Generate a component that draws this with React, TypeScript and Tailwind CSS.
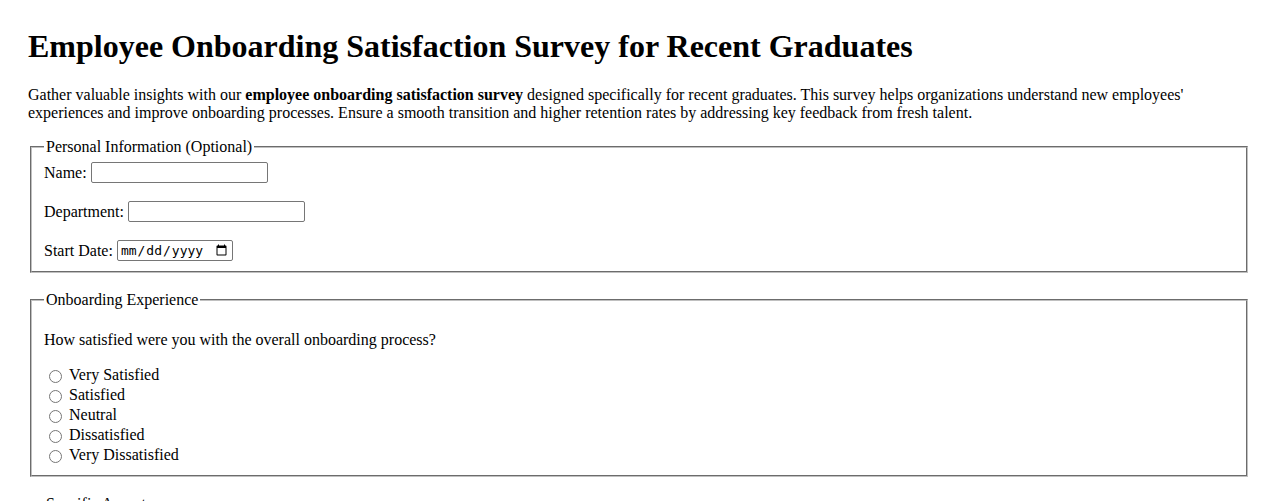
import React from "react";

const inputCls =
  "border border-[#767676] rounded-[2px] bg-white px-[2px] py-[1px] h-[21px] text-[13.33px] [font-family:'DejaVu_Sans',sans-serif] text-black";

const fieldsetCls =
  "mx-[2px] border-2 [border-style:groove] border-[#c0c0c0] px-3 pt-[5.6px] pb-[10px]";

function Radio({ name, label }: { name: string; label: string }) {
  return (
    <div className="flex items-center h-5">
      <input type="radio" name={name} className="w-[13px] h-[13px] ml-[5px] mr-[3px] mt-[3px] mb-0" />
      <span className="ml-1">{label}</span>
    </div>
  );
}

export default function App() {
  return (
    <div className="p-[28px] pb-0 text-[16px] text-black leading-[normal] [font-family:'Liberation_Serif','Times_New_Roman',serif] bg-white">
      <h1 className="text-[32px] font-bold mb-[21.44px]">
        Employee Onboarding Satisfaction Survey for Recent Graduates
      </h1>
      <p className="mb-4">
        Gather valuable insights with our <strong>employee onboarding satisfaction survey</strong> designed
        specifically for recent graduates. This survey helps organizations understand new employees'
        experiences and improve onboarding processes. Ensure a smooth transition and higher retention rates by
        addressing key feedback from fresh talent.
      </p>
      <form>
        <fieldset className={fieldsetCls}>
          <legend className="px-[2px]">Personal Information (Optional)</legend>
          <div className="flex flex-col gap-[18px]">
            <div className="flex items-center h-[21px]">
              <label>Name:</label>
              <input type="text" className={inputCls + " w-[177px] ml-1"} />
            </div>
            <div className="flex items-center h-[21px]">
              <label>Department:</label>
              <input type="text" className={inputCls + " w-[177px] ml-1"} />
            </div>
            <div className="flex items-center h-[21px]">
              <label>Start Date:</label>
              <input
                type="date"
                className="ml-1 w-[116px] h-[21px] border border-[#767676] rounded-[2px] bg-white px-[2px] text-[13px] [font-family:'DejaVu_Sans_Mono',monospace] text-black"
              />
            </div>
          </div>
        </fieldset>
        <div className="h-[18.4px]" />
        <fieldset className={fieldsetCls}>
          <legend className="px-[2px]">Onboarding Experience</legend>
          <p className="my-4">How satisfied were you with the overall onboarding process?</p>
          <div className="flex flex-col">
            <Radio name="overall" label="Very Satisfied" />
            <Radio name="overall" label="Satisfied" />
            <Radio name="overall" label="Neutral" />
            <Radio name="overall" label="Dissatisfied" />
            <Radio name="overall" label="Very Dissatisfied" />
          </div>
        </fieldset>
        <div className="h-[18.4px]" />
        <fieldset className={fieldsetCls}>
          <legend className="px-[2px]">Specific Aspects</legend>
          <p className="my-4">How clear were the job expectations communicated during onboarding?</p>
          <div className="flex flex-col">
            <Radio name="clarity" label="Very Clear" />
            <Radio name="clarity" label="Clear" />
            <Radio name="clarity" label="Neutral" />
          </div>
        </fieldset>
      </form>
    </div>
  );
}
